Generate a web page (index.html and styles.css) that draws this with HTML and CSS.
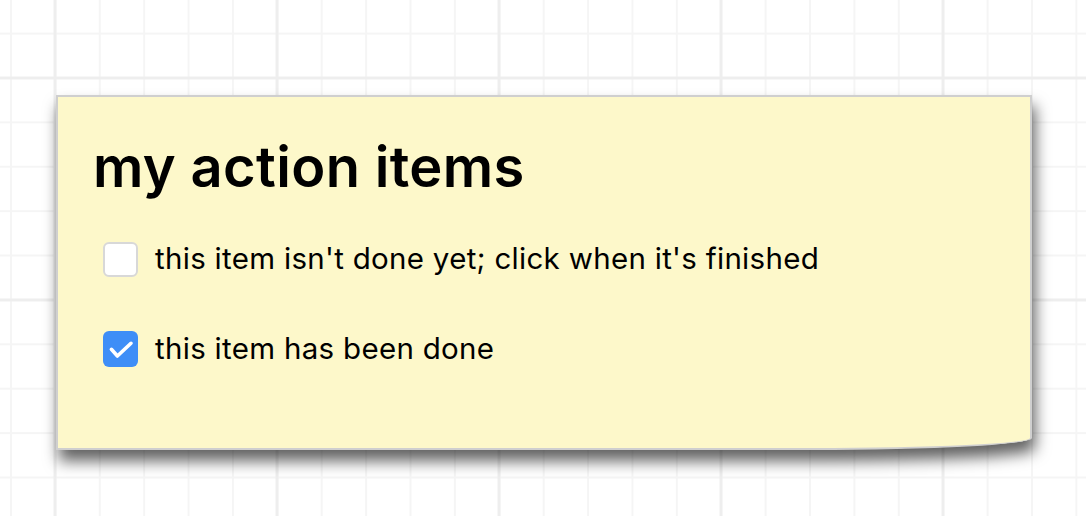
FILE: index.html
```html
<!DOCTYPE html>
<html lang="en">
<head>
<meta charset="utf-8">
<title>my action items</title>
<link rel="stylesheet" href="styles.css">
</head>
<body>
<main class="canvas">
  <section class="note">
    <h1 class="note-title">my action items</h1>
    <ul class="todo-list">
      <li class="todo">
        <span class="box"></span>
        <span class="todo-text">this item isn't done yet; click when it's finished</span>
      </li>
      <li class="todo">
        <span class="box box-checked">
          <svg viewBox="0 0 35 36" width="35" height="36" aria-hidden="true"><path d="M8.4 18.3 L14.4 25 L28 12.3" fill="none" stroke="#fff" stroke-width="3.6" stroke-linecap="round" stroke-linejoin="round"/></svg>
        </span>
        <span class="todo-text">this item has been done</span>
      </li>
    </ul>
  </section>
</main>
</body>
</html>
```
FILE: styles.css
```css
html, body {
  margin: 0;
  padding: 0;
  height: 100%;
  overflow: hidden;
}

body {
  background-color: #ffffff;
  background-image:
    linear-gradient(to right, #eeeeee 3px, transparent 3px),
    linear-gradient(to bottom, #eeeeee 3px, transparent 3px),
    linear-gradient(to right, #f5f5f5 2px, transparent 2px),
    linear-gradient(to bottom, #f5f5f5 2px, transparent 2px);
  background-size:
    222px 100%,
    100% 222px,
    44.4px 100%,
    100% 44.4px;
  background-position:
    53.5px 0,
    0 76.5px,
    10px 0,
    0 32.6px;
  font-family: Inter, "Noto Sans", "Liberation Sans", sans-serif;
  color: #000;
}

.canvas {
  padding: 95px 0 0 56px;
}

.note {
  box-sizing: border-box;
  width: 976px;
  height: 355px;
  background: #fdf8ca;
  border: 2px solid #cfcfcf;
  border-bottom-right-radius: 220px 12px;
  box-shadow: 3px 11px 15px rgba(0, 0, 0, 0.62);
  padding: 42px 34px 0 35px;
}

.note-title {
  margin: 0;
  font-size: 56px;
  line-height: 1;
  font-weight: 600;
  letter-spacing: 0.35px;
}

.todo-list {
  list-style: none;
  margin: 46px 0 0 10px;
  padding: 0;
  display: flex;
  flex-direction: column;
  gap: 54px;
}

.todo {
  display: flex;
  align-items: center;
  gap: 17px;
  height: 36px;
}

.box {
  box-sizing: border-box;
  flex: none;
  width: 35px;
  height: 35px;
  border: 2px solid #d8d8d8;
  border-radius: 6px;
  background: #ffffff;
}

.box-checked {
  border: none;
  height: 36px;
  background: #3e8ef7;
  display: flex;
}

.todo-text {
  font-size: 29.5px;
  line-height: 1;
  font-weight: 400;
  letter-spacing: 0.3px;
}
```
